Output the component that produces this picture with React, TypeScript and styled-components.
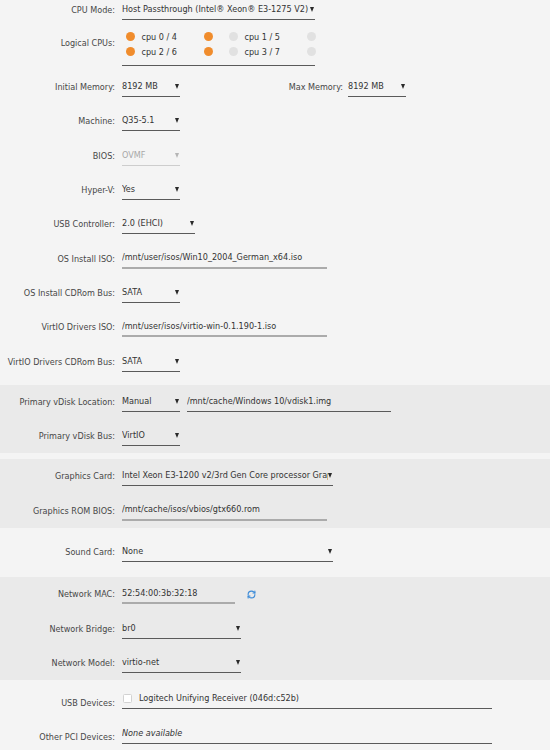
import React from "react";
import styled, { createGlobalStyle } from "styled-components";
import { RefreshCw } from "lucide-react";

const Global = createGlobalStyle`
  html, body { margin: 0; padding: 0; background: #f4f4f4; }
  body {
    font-family: "DejaVu Sans Condensed", "DejaVu Sans", "Liberation Sans", sans-serif;
    font-stretch: condensed;
    font-size: 9px;
    color: #3a3a3a;
    overflow: hidden;
  }
`;

const Page = styled.div`
  margin-top: -7px;
  display: flex;
  flex-direction: column;
  gap: 6px;
`;

const Section = styled.section<{ $band?: boolean; $pad?: number }>`
  background: ${(p) => (p.$band ? "#eaeaea" : "transparent")};
  padding: ${(p) => p.$pad ?? 0}px 0;
`;

const Row = styled.div<{ $h?: number }>`
  display: flex;
  align-items: center;
  height: ${(p) => p.$h ?? 34.3}px;
`;

const Label = styled.div<{ $top?: number }>`
  width: 115px;
  flex: none;
  margin-right: 7px;
  text-align: right;
  line-height: 20px;
  color: #474747;
  white-space: nowrap;
  align-self: ${(p) => (p.$top !== undefined ? "flex-start" : "auto")};
  padding-top: ${(p) => p.$top ?? 0}px;
`;

const SubLabel = styled.div`
  width: 163px;
  flex: none;
  margin-right: 5px;
  text-align: right;
  line-height: 20px;
  color: #474747;
`;

const Select = styled.div<{ $w: number; $disabled?: boolean; $gap?: number }>`
  display: flex;
  align-items: center;
  flex: none;
  width: ${(p) => p.$w}px;
  height: 20px;
  box-sizing: border-box;
  margin-left: ${(p) => p.$gap ?? 0}px;
  padding-right: 1px;
  border-bottom: 1px solid ${(p) => (p.$disabled ? "#cdcdcd" : "#5a5a5a")};
  color: ${(p) => (p.$disabled ? "#a8a8a8" : "#333")};
`;

const SelectText = styled.span`
  flex: 1;
  min-width: 0;
  overflow: hidden;
  white-space: nowrap;
  line-height: 19px;
`;

const Caret = styled.span<{ $disabled?: boolean }>`
  flex: none;
  width: 0;
  height: 0;
  border-left: 2.5px solid transparent;
  border-right: 2.5px solid transparent;
  border-top: 5px solid ${(p) => (p.$disabled ? "#b5b5b5" : "#2a2a2a")};
`;

const TextInput = styled.div<{ $w: number; $light?: boolean; $gap?: number; $raise?: number; $italic?: boolean }>`
  display: flex;
  align-items: center;
  flex: none;
  width: ${(p) => p.$w}px;
  height: 20px;
  box-sizing: border-box;
  margin-left: ${(p) => p.$gap ?? 0}px;
  margin-bottom: ${(p) => p.$raise ?? 0}px;
  border-bottom: ${(p) => (p.$light ? "2px solid #ababab" : "1px solid #5a5a5a")};
  color: #333;
  line-height: 19px;
  white-space: nowrap;
  overflow: hidden;
  font-style: ${(p) => (p.$italic ? "italic" : "normal")};
`;

const RefreshButton = styled.span`
  display: inline-flex;
  margin-left: 12px;
  color: #3c8bd8;
`;

const CpuBox = styled.div`
  align-self: flex-start;
  margin-top: 2px;
  width: 193px;
  box-sizing: border-box;
  padding: 0 0 6px 3.5px;
  border-bottom: 1px solid #5a5a5a;
  display: grid;
  grid-template-columns: repeat(2, max-content);
  column-gap: 16px;
`;

const CpuPair = styled.div`
  display: grid;
  grid-template-columns: 9px 55px 9px;
  column-gap: 7px;
  align-items: center;
  height: 15px;
  color: #333;
`;

const Dot = styled.span<{ $on: boolean }>`
  width: 9px;
  height: 9px;
  border-radius: 50%;
  background: ${(p) => (p.$on ? "#f08c2c" : "#e1e1e1")};
`;

const CheckBox = styled.span`
  flex: none;
  width: 9px;
  height: 9px;
  box-sizing: border-box;
  margin: 0 7px 0 1px;
  background: #fff;
  border: 1px solid #d2d2d2;
  border-radius: 1.5px;
`;

const cpus = [
  { name: "cpu 0 / 4", on: true },
  { name: "cpu 1 / 5", on: false },
  { name: "cpu 2 / 6", on: true },
  { name: "cpu 3 / 7", on: false },
];

function Sel({ w, v, disabled, gap }: { w: number; v: string; disabled?: boolean; gap?: number }) {
  return (
    <Select $w={w} $disabled={disabled} $gap={gap}>
      <SelectText>{v}</SelectText>
      <Caret $disabled={disabled} />
    </Select>
  );
}

export default function App() {
  return (
    <>
      <Global />
      <Page>
        <Section>
          <Row>
            <Label>CPU Mode:</Label>
            <Sel w={193} v="Host Passthrough (Intel® Xeon® E3-1275 V2)" />
          </Row>
          <Row $h={42.7}>
            <Label $top={5.5}>Logical CPUs:</Label>
            <CpuBox>
              {cpus.map((c) => (
                <CpuPair key={c.name}>
                  <Dot $on={c.on} />
                  <span>{c.name}</span>
                  <Dot $on={c.on} />
                </CpuPair>
              ))}
            </CpuBox>
          </Row>
          <Row>
            <Label>Initial Memory:</Label>
            <Sel w={58} v="8192 MB" />
            <SubLabel>Max Memory:</SubLabel>
            <Sel w={58} v="8192 MB" />
          </Row>
          <Row>
            <Label>Machine:</Label>
            <Sel w={58} v="Q35-5.1" />
          </Row>
          <Row>
            <Label>BIOS:</Label>
            <Sel w={58} v="OVMF" disabled />
          </Row>
          <Row>
            <Label>Hyper-V:</Label>
            <Sel w={58} v="Yes" />
          </Row>
          <Row>
            <Label>USB Controller:</Label>
            <Sel w={73} v="2.0 (EHCI)" />
          </Row>
          <Row>
            <Label>OS Install ISO:</Label>
            <TextInput $w={205} $light>/mnt/user/isos/Win10_2004_German_x64.iso</TextInput>
          </Row>
          <Row>
            <Label>OS Install CDRom Bus:</Label>
            <Sel w={58} v="SATA" />
          </Row>
          <Row>
            <Label>VirtIO Drivers ISO:</Label>
            <TextInput $w={205} $light>/mnt/user/isos/virtio-win-0.1.190-1.iso</TextInput>
          </Row>
          <Row>
            <Label>VirtIO Drivers CDRom Bus:</Label>
            <Sel w={58} v="SATA" />
          </Row>
        </Section>

        <Section $band>
          <Row>
            <Label>Primary vDisk Location:</Label>
            <Sel w={58} v="Manual" />
            <TextInput $w={204} $gap={7}>/mnt/cache/Windows 10/vdisk1.img</TextInput>
          </Row>
          <Row>
            <Label>Primary vDisk Bus:</Label>
            <Sel w={58} v="VirtIO" />
          </Row>
        </Section>

        <Section $band>
          <Row>
            <Label>Graphics Card:</Label>
            <Sel w={211} v="Intel Xeon E3-1200 v2/3rd Gen Core processor Graphics Controller" />
          </Row>
          <Row>
            <Label>Graphics ROM BIOS:</Label>
            <TextInput $w={205} $light>/mnt/cache/isos/vbios/gtx660.rom</TextInput>
          </Row>
        </Section>

        <Section $pad={1.5}>
          <Row>
            <Label>Sound Card:</Label>
            <Sel w={211} v="None" />
          </Row>
        </Section>

        <Section $band>
          <Row>
            <Label>Network MAC:</Label>
            <TextInput $w={113} $light>52:54:00:3b:32:18</TextInput>
            <RefreshButton>
              <RefreshCw size={9} strokeWidth={3} />
            </RefreshButton>
          </Row>
          <Row>
            <Label>Network Bridge:</Label>
            <Sel w={119} v="br0" />
          </Row>
          <Row>
            <Label>Network Model:</Label>
            <Sel w={119} v="virtio-net" />
          </Row>
        </Section>

        <Section>
          <Row>
            <Label>USB Devices:</Label>
            <TextInput $w={370} $raise={8}>
              <CheckBox />
              Logitech Unifying Receiver (046d:c52b)
            </TextInput>
          </Row>
          <Row>
            <Label>Other PCI Devices:</Label>
            <TextInput $w={370} $raise={7} $italic>None available</TextInput>
          </Row>
        </Section>
      </Page>
    </>
  );
}
